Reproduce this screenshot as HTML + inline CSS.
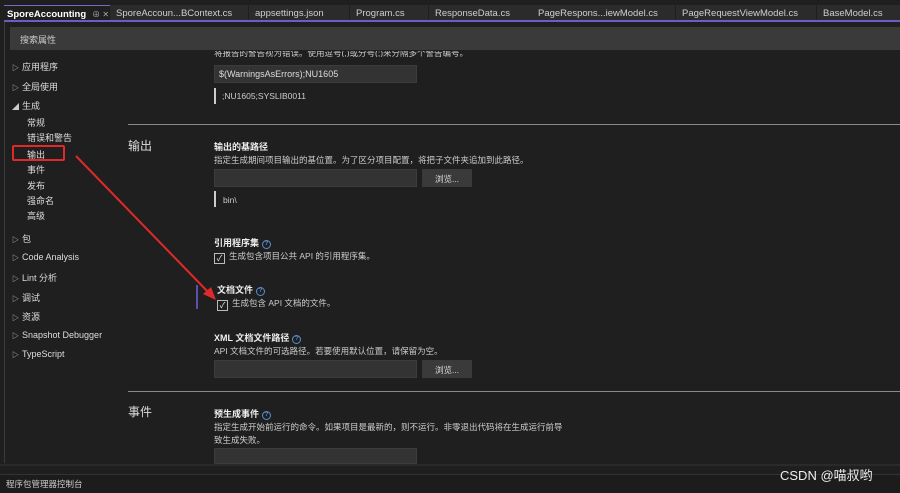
<!DOCTYPE html>
<html><head><meta charset="utf-8"><style>
*{margin:0;padding:0;box-sizing:border-box}
body{width:900px;height:493px;background:#1f1f1f;color:#ddd;font-family:"Liberation Sans","Noto Sans CJK SC",sans-serif;font-size:9px;position:relative;overflow:hidden}
.a{position:absolute;white-space:nowrap}
.tab{position:absolute;top:5px;height:16px;background:#2b2b2b;color:#cfcfcf;font-size:9.5px;padding:3px 6px;white-space:nowrap;overflow:hidden}
.nav{position:absolute;left:12px;font-size:9px;color:#ddd}
.nav b{display:inline-block;width:10px;font-weight:normal;font-size:7px;color:#ccc}
.sub{position:absolute;left:27px;font-size:9px;color:#ddd}
.inp{position:absolute;background:#333;border:1px solid #3c3c3c;height:18px}
.btn{position:absolute;background:#3a3a3a;height:18px;width:58px;text-align:center;color:#ddd;font-size:8.5px;padding-top:4px}
.t{font-weight:bold;color:#eee;font-size:9px}
.d{color:#ccc;font-size:8.5px}
.q{display:inline-block;width:9px;height:9px;border:1px solid #5a8fd0;border-radius:50%;color:#5a8fd0;font-size:6px;text-align:center;line-height:7px;margin-left:3px;vertical-align:1px}
.cb{display:inline-block;width:11px;height:11px;border:1px solid #bbb;margin-right:4px;vertical-align:-2px;font-size:8px;line-height:9px;text-align:center;color:#eee}
.hl{position:absolute;height:1px;background:#8a8a8a;left:128px;right:0}
</style></head><body>
<div class="a" style="left:0;top:0;width:900px;height:22px;background:#1f1f1f"></div>
<div class="tab" style="left:4px;width:106px;background:#1f1f1f;color:#fff;font-weight:bold;border-top:1px solid #7a68c8;padding:3px 3px">SporeAccounting<span style="font-weight:normal;color:#aaa;margin-left:6px;font-size:8px">⊕ ✕</span></div>
<div class="tab" style="left:110px;width:138px">SporeAccoun...BContext.cs</div>
<div class="tab" style="left:249px;width:100px">appsettings.json</div>
<div class="tab" style="left:350px;width:78px">Program.cs</div>
<div class="tab" style="left:429px;width:103px">ResponseData.cs</div>
<div class="tab" style="left:532px;width:143px">PageRespons...iewModel.cs</div>
<div class="tab" style="left:676px;width:140px">PageRequestViewModel.cs</div>
<div class="tab" style="left:817px;width:83px">BaseModel.cs</div>
<div class="a" style="left:4px;top:20px;width:896px;height:2px;background:#6e5cc4"></div>
<div class="a" style="left:4px;top:22px;width:1px;height:441px;background:#3a3a3a"></div>
<div class="a" style="left:10px;top:27px;width:890px;height:23px;background:#3a3a3a;color:#ccc;padding:6px 10px;font-size:9px">搜索属性</div>

<div class="nav" style="top:60px"><b>▷</b>应用程序</div>
<div class="nav" style="top:80px"><b>▷</b>全局使用</div>
<div class="nav" style="top:99px"><b>◢</b>生成</div>
<div class="sub" style="top:116px">常规</div>
<div class="sub" style="top:131px">错误和警告</div>
<div class="sub" style="top:148px">输出</div>
<div class="a" style="left:12px;top:145px;width:53px;height:16px;border:2px solid #e02a2a;border-radius:2px"></div>
<div class="sub" style="top:163px">事件</div>
<div class="sub" style="top:179px">发布</div>
<div class="sub" style="top:194px">强命名</div>
<div class="sub" style="top:209px">高级</div>
<div class="nav" style="top:232px"><b>▷</b>包</div>
<div class="nav" style="top:252px"><b>▷</b>Code Analysis</div>
<div class="nav" style="top:271px"><b>▷</b>Lint 分析</div>
<div class="nav" style="top:291px"><b>▷</b>调试</div>
<div class="nav" style="top:310px"><b>▷</b>资源</div>
<div class="nav" style="top:330px"><b>▷</b>Snapshot Debugger</div>
<div class="nav" style="top:349px"><b>▷</b>TypeScript</div>

<div class="a d" style="left:214px;top:51px;height:6px;overflow:hidden;line-height:4px">将报告的警告视为错误。使用逗号(,)或分号(;)来分隔多个警告编号。</div>
<div class="inp" style="left:214px;top:65px;width:203px;color:#ddd;padding:3px 4px;font-size:9px">$(WarningsAsErrors);NU1605</div>
<div class="a" style="left:214px;top:88px;width:2px;height:16px;background:#ccc"></div>
<div class="a d" style="left:222px;top:91px">;NU1605;SYSLIB0011</div>
<div class="hl" style="top:124px"></div>
<div class="a" style="left:128px;top:137px;font-size:12px;color:#ddd">输出</div>
<div class="a t" style="left:214px;top:140px">输出的基路径</div>
<div class="a d" style="left:214px;top:154px">指定生成期间项目输出的基位置。为了区分项目配置，将把子文件夹追加到此路径。</div>
<div class="inp" style="left:214px;top:169px;width:203px"></div>
<div class="btn" style="left:422px;top:169px;width:50px">浏览...</div>
<div class="a" style="left:214px;top:191px;width:2px;height:16px;background:#ccc"></div>
<div class="a d" style="left:223px;top:195px">bin\</div>
<div class="a t" style="left:214px;top:236px">引用程序集<span class="q">?</span></div>
<div class="a d" style="left:214px;top:250px"><span class="cb">✓</span>生成包含项目公共 API 的引用程序集。</div>
<div class="a" style="left:196px;top:285px;width:2px;height:24px;background:#5b4fb0"></div>
<div class="a t" style="left:217px;top:283px">文档文件<span class="q">?</span></div>
<div class="a d" style="left:217px;top:297px"><span class="cb">✓</span>生成包含 API 文档的文件。</div>
<div class="a t" style="left:214px;top:331px">XML 文档文件路径<span class="q">?</span></div>
<div class="a d" style="left:214px;top:345px">API 文档文件的可选路径。若要使用默认位置，请保留为空。</div>
<div class="inp" style="left:214px;top:360px;width:203px"></div>
<div class="btn" style="left:422px;top:360px;width:50px">浏览...</div>
<div class="hl" style="top:391px"></div>
<div class="a" style="left:128px;top:403px;font-size:12px;color:#ddd">事件</div>
<div class="a t" style="left:214px;top:407px">预生成事件<span class="q">?</span></div>
<div class="a d" style="left:214px;top:421px;line-height:13px">指定生成开始前运行的命令。如果项目是最新的，则不运行。非零退出代码将在生成运行前导<br>致生成失败。</div>
<div class="inp" style="left:214px;top:448px;width:203px;height:16px"></div>
<div class="a" style="left:0;top:464px;width:900px;height:2px;background:#2a2a2a"></div>
<div class="a" style="left:0;top:474px;width:900px;height:19px;background:#1c1c1c;border-top:1px solid #333;color:#ccc;padding:3px 6px;font-size:8.5px">程序包管理器控制台</div>
<div class="a" style="left:780px;top:465px;font-size:13px;color:#eee">CSDN @喵叔哟</div>
<svg class="a" style="left:0;top:0" width="900" height="493"><line x1="76" y1="156" x2="210" y2="294" stroke="#e02a2a" stroke-width="2"/><polygon points="216,300 203,294 211,287" fill="#e02a2a"/></svg>
</body></html>
